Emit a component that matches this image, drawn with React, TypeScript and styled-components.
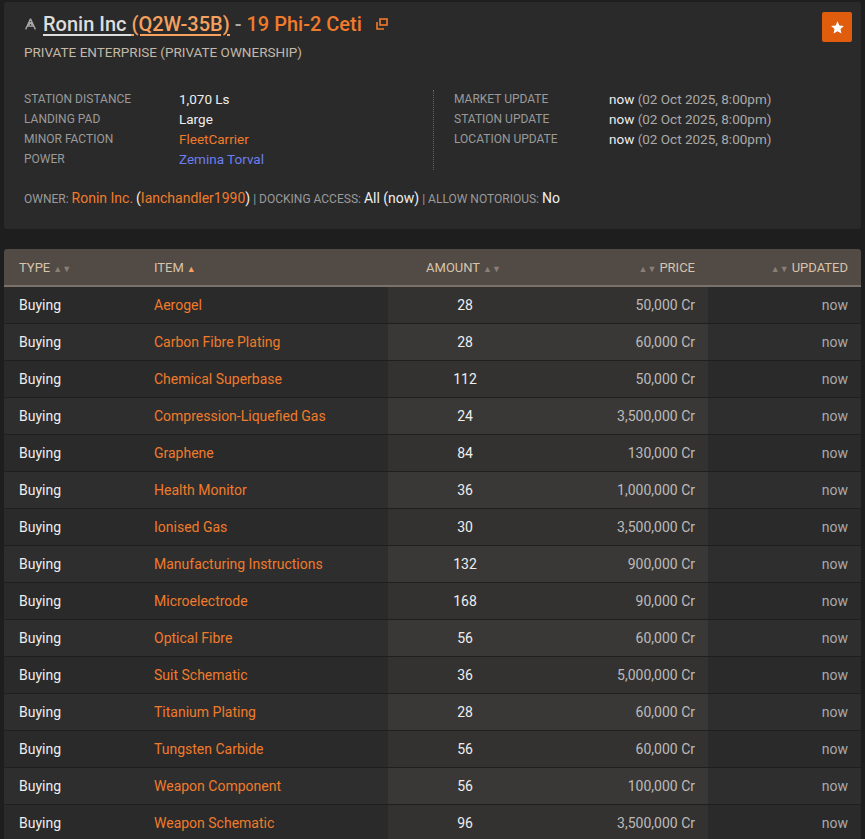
import React from "react";
import styled, { createGlobalStyle } from "styled-components";

const Global = createGlobalStyle`
  body { margin: 0; background: #1e1e1e; font-family: "Roboto", "Noto Sans", sans-serif; color: #ddd; }
`;
const Page = styled.div` padding: 2px 4px 0 4px; display: flex; flex-direction: column; gap: 20px; `;
const Panel = styled.div`
  background: #2a2a2a; border-radius: 3px; padding: 10px 9px 22px 20px; position: relative; height: 195px;
`;
const Title = styled.h1`
  margin: 0; font-size: 20px; font-weight: 500; color: #ddd; display: flex; align-items: center; gap: 6px;
`;
const U = styled.span` text-decoration: underline; text-underline-offset: 3px; `;
const Orange = styled.span<{ $u?: boolean }>` color: #f07b2b; ${p => p.$u ? "text-decoration: underline; text-underline-offset: 3px;" : ""}`;
const Sub = styled.div` margin-top: 8px; font-size: 13.5px; color: #c2b8a8; `;
const Info = styled.div` display: grid; grid-template-columns: 409px 1fr; margin-top: 30px; `;
const Col = styled.div<{ $line?: boolean }>`
  display: grid; grid-template-columns: 155px 1fr; row-gap: 2px; align-content: start;
  ${p => p.$line ? "border-left: 1px dotted #666; padding-left: 20px; height: 80px;" : ""}
`;
const Label = styled.div` font-size: 12px; color: #9a9a9a; line-height: 18px; `;
const Val = styled.div<{ $c?: string }>` font-size: 13.5px; color: ${p => p.$c || "#eee"}; line-height: 18px; `;
const Dim = styled.span` color: #aaa; `;
const Owner = styled.div` margin-top: 20px; font-size: 12px; color: #9a9a9a; `;
const Big = styled.span<{ $c?: string }>` font-size: 14px; color: ${p => p.$c || "#eee"}; `;
const Star = styled.div`
  position: absolute; right: 9px; top: 10px; width: 30px; height: 30px; background: #e05d0e;
  border-radius: 2px; display: flex; align-items: center; justify-content: center;
`;
const Table = styled.div` border-radius: 3px 3px 0 0; overflow: hidden; `;
const Grid = styled.div` display: grid; grid-template-columns: 135px 249px 152px 168px 153px; `;
const Head = styled(Grid)`
  background: #524a44; border-bottom: 2px solid #7a716a; height: 36px; align-items: center;
  font-size: 13px; color: #d7c4ae;
`;
const H = styled.div<{ $a?: string }>` padding: 0 13px 0 15px; text-align: ${p => p.$a || "left"}; `;
const Row = styled(Grid)<{ $alt: boolean }>`
  height: 36px; border-bottom: 1px solid #1f1f1f; align-items: center; font-size: 14px;
  background: ${p => p.$alt ? "#2e2e2e" : "#2a2a2a"};
`;
const C = styled.div<{ $a?: string; $c?: string; $hl?: boolean; $alt?: boolean }>`
  height: 100%; display: flex; align-items: center; padding: 0 13px 0 15px;
  justify-content: ${p => p.$a === "right" ? "flex-end" : p.$a === "center" ? "center" : "flex-start"};
  color: ${p => p.$c || "#eee"};
  background: ${p => p.$hl ? (p.$alt ? "#3a3836" : "#333231") : "transparent"};
`;
const Arr = styled.span<{ $c?: string }>` font-size: 9px; color: ${p => p.$c || "#8a7f77"}; margin: 0 3px; `;

const data: [string, number, string][] = [
  ["Aerogel", 28, "50,000"], ["Carbon Fibre Plating", 28, "60,000"], ["Chemical Superbase", 112, "50,000"],
  ["Compression-Liquefied Gas", 24, "3,500,000"], ["Graphene", 84, "130,000"], ["Health Monitor", 36, "1,000,000"],
  ["Ionised Gas", 30, "3,500,000"], ["Manufacturing Instructions", 132, "900,000"], ["Microelectrode", 168, "90,000"],
  ["Optical Fibre", 56, "60,000"], ["Suit Schematic", 36, "5,000,000"], ["Titanium Plating", 28, "60,000"],
  ["Tungsten Carbide", 56, "60,000"], ["Weapon Component", 56, "100,000"], ["Weapon Schematic", 96, "3,500,000"],
];

export default function App() {
  return (
    <Page>
      <Global />
      <Panel>
        <Title>
          <svg width="13" height="13" viewBox="0 0 16 16" fill="none" stroke="#aaa" strokeWidth="1.6"><path d="M8 1 L2 14 M8 1 L14 14 M4 10 H12 M8 5 L6 9 M8 5 L10 9" /></svg>
          <span><U>Ronin Inc <Orange $u style={{ color: "#f5a15f" }}>(Q2W-35B)</Orange></U> <Dim>-</Dim> <Orange>19 Phi-2 Ceti</Orange></span>
          <svg width="12" height="12" viewBox="0 0 12 12" fill="none" stroke="#f07b2b" strokeWidth="1.6" style={{ marginLeft: 8 }}><rect x="4" y="1" width="7" height="6" /><path d="M1 4 V11 H8" /></svg>
        </Title>
        <Sub>PRIVATE ENTERPRISE (PRIVATE OWNERSHIP)</Sub>
        <Info>
          <Col>
            <Label>STATION DISTANCE</Label><Val>1,070 Ls</Val>
            <Label>LANDING PAD</Label><Val>Large</Val>
            <Label>MINOR FACTION</Label><Val $c="#f07b2b">FleetCarrier</Val>
            <Label>POWER</Label><Val $c="#6b7ff0">Zemina Torval</Val>
          </Col>
          <Col $line>
            <Label>MARKET UPDATE</Label><Val>now <Dim>(02 Oct 2025, 8:00pm)</Dim></Val>
            <Label>STATION UPDATE</Label><Val>now <Dim>(02 Oct 2025, 8:00pm)</Dim></Val>
            <Label>LOCATION UPDATE</Label><Val>now <Dim>(02 Oct 2025, 8:00pm)</Dim></Val>
          </Col>
        </Info>
        <Owner>
          OWNER: <Big $c="#f07b2b">Ronin Inc.</Big> <Big>(<Orange>Ianchandler1990</Orange>)</Big> | DOCKING ACCESS: <Big>All (now)</Big> | ALLOW NOTORIOUS: <Big>No</Big>
        </Owner>
        <Star>
          <svg width="15" height="15" viewBox="0 0 24 24" fill="#fff"><path d="M12 2l3 6.6 7.2.8-5.4 4.9 1.5 7.1L12 17.8 5.7 21.4l1.5-7.1L1.8 9.4 9 8.6z" /></svg>
        </Star>
      </Panel>
      <Table>
        <Head>
          <H>TYPE<Arr>▲▼</Arr></H>
          <H>ITEM<Arr $c="#f5a15f">▲</Arr></H>
          <H $a="center">AMOUNT<Arr>▲▼</Arr></H>
          <H $a="right"><Arr>▲▼</Arr>PRICE</H>
          <H $a="right"><Arr>▲▼</Arr>UPDATED</H>
        </Head>
        {data.map(([n, a, p], i) => {
          const alt = i % 2 === 1;
          return (
            <Row key={n} $alt={alt}>
              <C>Buying</C>
              <C $c="#f07b2b">{n}</C>
              <C $a="center" $hl $alt={alt}>{a}</C>
              <C $a="right" $hl $alt={alt} $c="#bbb">{p} Cr</C>
              <C $a="right" $c="#aaa">now</C>
            </Row>
          );
        })}
      </Table>
    </Page>
  );
}
